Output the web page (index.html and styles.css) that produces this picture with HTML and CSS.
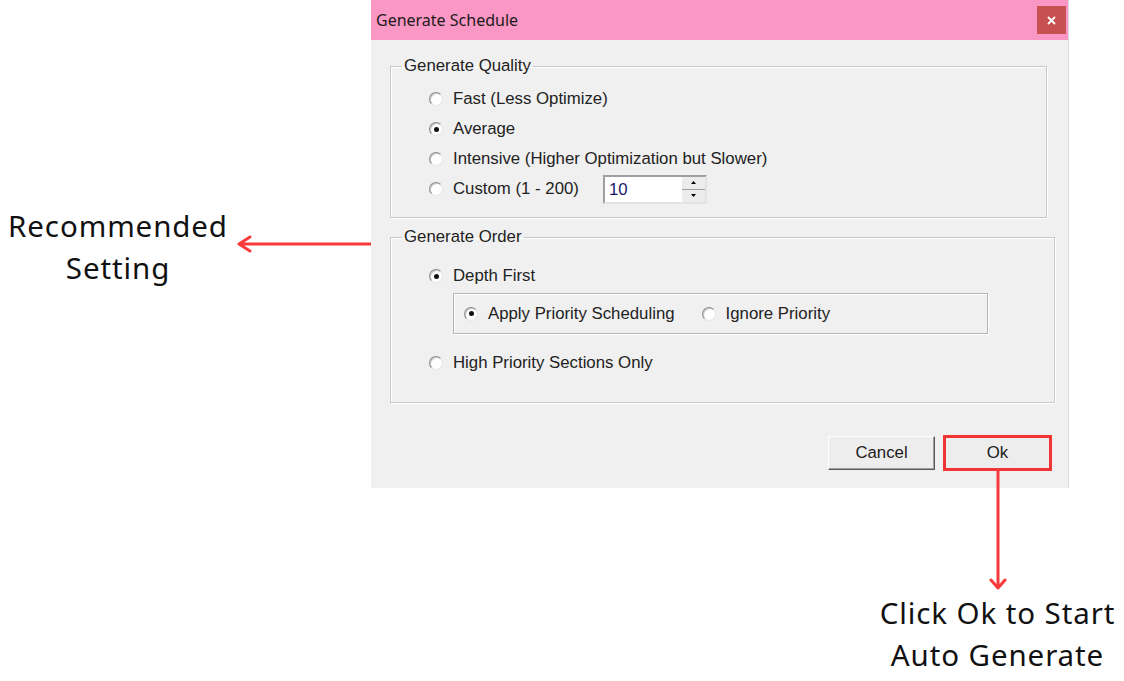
FILE: index.html
```html
<!DOCTYPE html>
<html lang="en">
<head>
    <meta charset="UTF-8">
    <meta name="viewport" content="width=device-width, initial-scale=1.0">
    <title>Generate Schedule</title>
    <link rel="stylesheet" href="styles.css">
</head>
<body>
    <div class="page">
        <div class="note-left">
            <p class="note-text">Recommended<br>Setting</p>
            <svg class="arrow-left" width="135" height="20" viewBox="0 0 135 20">
                <path d="M135 10H3M14 3L3 10L14 17" fill="none" stroke="#f73a3a" stroke-width="3" stroke-linecap="round" stroke-linejoin="round"/>
            </svg>
        </div>

        <div class="dialog">
            <div class="titlebar">
                <span class="title">Generate Schedule</span>
                <span class="close">
                    <svg width="9" height="9" viewBox="0 0 9 9"><path d="M1 1L8 8M8 1L1 8" stroke="#fff" stroke-width="1.8"/></svg>
                </span>
            </div>

            <fieldset class="group quality">
                <legend>Generate Quality</legend>
                <div class="row"><span class="radio"></span>Fast (Less Optimize)</div>
                <div class="row"><span class="radio checked"></span>Average</div>
                <div class="row"><span class="radio"></span>Intensive (Higher Optimization but Slower)</div>
                <div class="row">
                    <span class="radio"></span>Custom (1 - 200)
                    <div class="spin">
                        <span class="spin-value">10</span>
                        <div class="spin-buttons">
                            <span class="spin-btn"><svg width="5" height="3" viewBox="0 0 5 3"><path d="M2.5 0L5 3H0Z" fill="#000"/></svg></span>
                            <span class="spin-btn"><svg width="5" height="3" viewBox="0 0 5 3"><path d="M0 0H5L2.5 3Z" fill="#000"/></svg></span>
                        </div>
                    </div>
                </div>
            </fieldset>

            <fieldset class="group order">
                <legend>Generate Order</legend>
                <div class="row"><span class="radio checked"></span>Depth First</div>
                <div class="sub-panel">
                    <div class="row"><span class="radio checked"></span>Apply Priority Scheduling</div>
                    <div class="row"><span class="radio"></span>Ignore Priority</div>
                </div>
                <div class="row last"><span class="radio"></span>High Priority Sections Only</div>
            </fieldset>

            <div class="buttons">
                <button class="btn">Cancel</button>
                <button class="btn ok">Ok
                    <span class="callout">
                        <svg class="arrow-down" width="20" height="122" viewBox="0 0 20 122">
                            <path d="M10 0V119M3 111L10 119L17 111" fill="none" stroke="#f73a3a" stroke-width="3" stroke-linecap="round" stroke-linejoin="round"/>
                        </svg>
                        <span class="note-text">Click Ok to Start<br>Auto Generate</span>
                    </span>
                </button>
            </div>
        </div>
    </div>
</body>
</html>
```

FILE: styles.css
```css
body {
    margin: 0;
    background: #fff;
    font-family: "Liberation Sans", Arial, sans-serif;
}
.page {
    display: flex;
    width: 1124px;
    height: 681px;
    overflow: hidden;
}

/* annotations */
.note-text {
    font-family: "Noto Sans", sans-serif;
    font-size: 29.5px;
    line-height: 42px;
    letter-spacing: 0.9px;
    color: #111;
    text-align: center;
    white-space: nowrap;
}
.note-left {
    width: 371px;
    display: flex;
    align-items: flex-start;
    padding-top: 205px;
}
.note-left .note-text {
    margin: 0;
    width: 236px;
}
.arrow-left {
    margin-top: 29px;
}

/* dialog */
.dialog {
    width: 697px;
    height: 488px;
    background: #f0f0f0;
    border-right: 1px solid #dcdcdc;
    color: #222;
    font-size: 16.8px;
}
.titlebar {
    height: 40px;
    background: #fa97c4;
    display: flex;
    align-items: center;
    justify-content: space-between;
    padding: 0 2px 0 5px;
}
.title {
    font-family: "Noto Sans", sans-serif;
    font-size: 16px;
    color: #1b1b1b;
}
.close {
    width: 29px;
    height: 28px;
    background: #c75050;
    display: flex;
    align-items: center;
    justify-content: center;
}

.group {
    margin: 0;
    border: 1px solid #c8c8c8;
    box-shadow: inset 1px 1px 0 #fff, 1px 1px 0 #fff;
    padding: 0 0 0 11px;
}
.group legend {
    padding: 0 2px;
    line-height: 18px;
}
.quality {
    margin: 17px 21px 0 19px;
    padding-top: 9px;
    padding-bottom: 13px;
}
.order {
    margin: 10px 13px 0 19px;
    padding-top: 15px;
    padding-bottom: 24px;
}
.row {
    display: flex;
    align-items: center;
    height: 30px;
    margin-left: 27px;
    white-space: nowrap;
}
.order .row.last {
    margin-top: 14px;
}

.radio {
    width: 12px;
    height: 12px;
    border-radius: 50%;
    background: #fff;
    border: 1px solid;
    border-color: #8c8c8c #e6e6e6 #e6e6e6 #8c8c8c;
    box-shadow: inset 1px 1px 0 #c4c4c4;
    margin-right: 10px;
    position: relative;
    flex: none;
}
.radio.checked::after {
    content: "";
    position: absolute;
    left: 3.5px;
    top: 3.5px;
    width: 5px;
    height: 5px;
    border-radius: 50%;
    background: #111;
}

.spin {
    margin-left: 24px;
    width: 100px;
    height: 25px;
    display: flex;
    justify-content: space-between;
    background: #fff;
    border: 2px solid;
    border-color: #a0a0a0 #e3e3e3 #e3e3e3 #a0a0a0;
}
.spin-value {
    padding-left: 4px;
    line-height: 26px;
    color: #1a1a6a;
}
.spin-buttons {
    width: 23px;
    display: flex;
    flex-direction: column;
    gap: 1px;
    background: #a0a0a0;
}
.spin-btn {
    flex: 1;
    background: #ececec;
    display: flex;
    align-items: center;
    justify-content: center;
}

.sub-panel {
    display: flex;
    align-items: center;
    width: 533px;
    height: 39px;
    margin: 2px 0 0 51px;
    border: 1px solid #b4b4b4;
    box-shadow: inset 1px 1px 0 #fff, 1px 1px 0 #fff;
}
.sub-panel .row {
    margin-left: 10px;
    margin-right: 17px;
}

.buttons {
    display: flex;
    justify-content: flex-end;
    gap: 9px;
    margin-top: 33px;
    padding-right: 17px;
}
.btn {
    width: 107px;
    height: 34px;
    font: inherit;
    color: #1b1b1b;
    background: #ededed;
    border: 1px solid;
    border-color: #fff #5a5a5a #5a5a5a #fff;
    box-shadow: inset -1px -1px 0 #a0a0a0;
    padding: 0;
}
.ok {
    position: relative;
    outline: 3px solid #f13535;
    outline-offset: -2px;
}
.callout {
    position: absolute;
    top: 100%;
    left: 50%;
    transform: translateX(-50%);
    display: flex;
    flex-direction: column;
    align-items: center;
    width: 260px;
}
.callout .note-text {
    margin-top: 1px;
}
```
